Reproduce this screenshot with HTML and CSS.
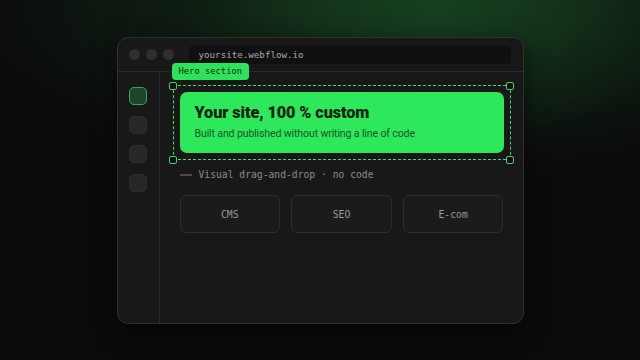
FILE: index.html
```html
<!DOCTYPE html>
<html lang="en">
<head>
<meta charset="utf-8">
<title>Webflow builder</title>
<link rel="stylesheet" href="styles.css">
</head>
<body>
<div class="stage">
  <div class="window">
    <div class="titlebar">
      <div class="dots"><span class="dot"></span><span class="dot"></span><span class="dot"></span></div>
      <div class="url">yoursite.webflow.io</div>
    </div>
    <div class="body">
      <aside class="sidebar">
        <span class="tool active"></span>
        <span class="tool"></span>
        <span class="tool"></span>
        <span class="tool"></span>
      </aside>
      <main class="canvas">
        <div class="selection">
          <span class="label">Hero section</span>
          <span class="handle tl"></span>
          <span class="handle tr"></span>
          <span class="handle bl"></span>
          <span class="handle br"></span>
          <div class="hero">
            <h1 class="hero-title">Your site, 100 % custom</h1>
            <p class="hero-sub">Built and published without writing a line of code</p>
          </div>
        </div>
        <div class="caption"><span class="rule"></span>Visual drag-and-drop · no code</div>
        <div class="features">
          <div class="feature">CMS</div>
          <div class="feature">SEO</div>
          <div class="feature">E-com</div>
        </div>
      </main>
    </div>
  </div>
</div>
</body>
</html>
```

FILE: styles.css
```css
* { box-sizing: border-box; }
html, body { margin: 0; padding: 0; }
body {
  width: 640px;
  height: 360px;
  overflow: hidden;
  background-color: #0b0b0b;
  background-image:
    radial-gradient(ellipse 260px 140px at 440px 0px, rgba(24, 74, 36, 0.7), rgba(24, 74, 36, 0) 100%),
    radial-gradient(ellipse 480px 180px at 420px 0px, rgba(18, 52, 26, 0.8), rgba(18, 52, 26, 0) 100%);
  font-family: "DejaVu Sans Mono", monospace;
}
.stage {
  display: flex;
  justify-content: center;
  padding-top: 37px;
}
.window {
  width: 407px;
  height: 287px;
  background: #181818;
  border: 1px solid #303030;
  border-radius: 11px;
  display: flex;
  flex-direction: column;
  box-shadow: 0 8px 24px rgba(0, 0, 0, 0.6);
}
.titlebar {
  height: 34px;
  border-bottom: 1px solid #2a2a2a;
  display: flex;
  align-items: center;
  padding: 0 12px 0 11px;
  gap: 15px;
}
.dots { display: flex; gap: 6px; }
.dot {
  width: 11px;
  height: 11px;
  border-radius: 50%;
  background: #2f2f2f;
}
.url {
  flex: 1;
  height: 18px;
  background: #101010;
  border-radius: 4px;
  padding-left: 10px;
  font-size: 9.2px;
  line-height: 18px;
  color: #a8a8a8;
}
.body {
  flex: 1;
  display: flex;
}
.sidebar {
  width: 42px;
  border-right: 1px solid #2a2a2a;
  display: flex;
  flex-direction: column;
  align-items: center;
  gap: 11px;
  padding-top: 15px;
}
.tool {
  width: 18px;
  height: 18px;
  border-radius: 5px;
  background: #272727;
  border: 1px solid #2d2d2d;
}
.tool.active {
  background: #1d4526;
  border: 1px solid #35a552;
}
.canvas {
  flex: 1;
  padding: 13px 12px 0 13px;
}
.selection {
  position: relative;
  border: 1px dashed #45da6b;
  padding: 6px;
}
.label {
  position: absolute;
  left: -2px;
  top: -23px;
  height: 17px;
  padding: 0 7px;
  background: #2ee35b;
  color: #0b2a12;
  border-radius: 4px;
  font-size: 8.8px;
  line-height: 17px;
}
.handle {
  position: absolute;
  width: 8px;
  height: 8px;
  background: #0e0e0e;
  border: 1px solid #3bd563;
  border-radius: 2px;
}
.handle.tl { left: -4.5px; top: -4.5px; }
.handle.tr { right: -4.5px; top: -4.5px; }
.handle.bl { left: -4.5px; bottom: -4.5px; }
.handle.br { right: -4.5px; bottom: -4.5px; }
.hero {
  height: 61px;
  background: #2ee85c;
  border-radius: 7px;
  padding: 12px 15px 0;
}
.hero-title {
  margin: 0;
  font-family: "Roboto", "Liberation Sans", sans-serif;
  font-weight: 900;
  font-size: 16.3px;
  line-height: 18px;
  color: #08230f;
  letter-spacing: -0.1px;
}
.hero-sub {
  margin: 5px 0 0;
  font-family: "Roboto", "Liberation Sans", sans-serif;
  font-size: 10.6px;
  line-height: 13px;
  color: #135522;
  letter-spacing: -0.15px;
}
.caption {
  margin: 9px 7px 0;
  display: flex;
  align-items: center;
  gap: 7px;
  font-size: 9.7px;
  line-height: 12px;
  color: #8c8c8c;
}
.rule {
  width: 12px;
  height: 2px;
  background: #4a4a4a;
}
.features {
  margin: 14px 7px 0;
  display: grid;
  grid-template-columns: repeat(3, 1fr);
  gap: 11px;
}
.feature {
  height: 38px;
  border: 1px solid #2c2c2c;
  border-radius: 6px;
  background: #1b1b1b;
  display: flex;
  align-items: center;
  justify-content: center;
  font-size: 9.8px;
  color: #999999;
}
```
